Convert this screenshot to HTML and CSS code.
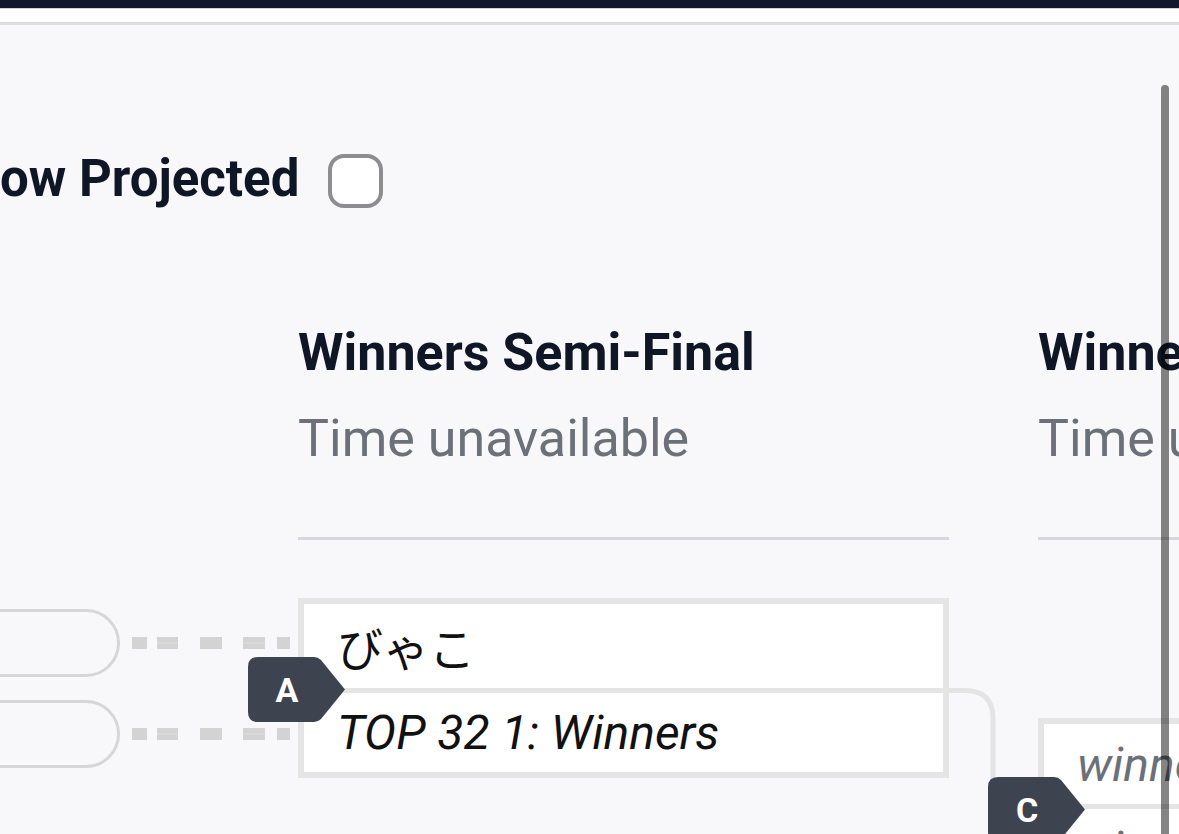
FILE: index.html
```html
<!DOCTYPE html>
<html lang="en">
<head>
<meta charset="utf-8">
<title>Bracket</title>
<link rel="stylesheet" href="styles.css">
</head>
<body>
<div class="topbar"></div>
<div class="subbar"></div>
<main class="content">
  <div class="projected">
    <span class="projected-label">Show Projected</span>
    <span class="checkbox"></span>
  </div>

  <div class="bracket">
    <div class="prev">
      <div class="slot">
        <div class="pill"></div>
        <svg class="dashes" width="178" height="14" viewBox="0 0 178 14">
          <g fill="#d3d3d3">
            <rect x="12" y="1" width="15" height="12"/><rect x="37" y="1" width="21" height="12"/><rect x="80" y="1" width="22" height="12"/><rect x="123" y="1" width="22" height="12"/><rect x="157" y="1" width="13" height="12"/>
          </g>
          <rect x="37" y="6.5" width="21" height="1" fill="#dedede"/><rect x="123" y="6.5" width="22" height="1" fill="#dedede"/>
        </svg>
      </div>
      <div class="slot">
        <div class="pill"></div>
        <svg class="dashes" width="178" height="14" viewBox="0 0 178 14">
          <g fill="#d3d3d3">
            <rect x="12" y="1" width="15" height="12"/><rect x="37" y="1" width="21" height="12"/><rect x="80" y="1" width="22" height="12"/><rect x="123" y="1" width="22" height="12"/><rect x="157" y="1" width="13" height="12"/>
          </g>
          <rect x="37" y="6.5" width="21" height="1" fill="#dedede"/><rect x="123" y="6.5" width="22" height="1" fill="#dedede"/>
        </svg>
      </div>
    </div>

    <section class="round">
      <header class="round-head">
        <h2 class="round-title">Winners Semi-Final</h2>
        <p class="round-time">Time unavailable</p>
      </header>
      <div class="match">
        <div class="entrant">びゃこ</div>
        <div class="entrant entrant-split"><em>TOP 32 1: Winners</em></div>
        <div class="badge"><svg class="badge-shape" width="97" height="65" viewBox="0 0 97 65"><path d="M10 0 H66 Q70 0 73 3 L97 32.5 L73 62 Q70 65 66 65 H10 Q0 65 0 55 V10 Q0 0 10 0 Z" fill="#3e4350"/></svg><span class="badge-letter">A</span></div>
        <svg class="link" width="60" height="160" viewBox="0 0 60 160"><path d="M0 2.5 H16 Q44 2.5 44 30.5 V160" fill="none" stroke="#e4e4e4" stroke-width="5"/></svg>
      </div>
    </section>

    <section class="round round-next">
      <header class="round-head">
        <h2 class="round-title">Winners Final</h2>
        <p class="round-time">Time unavailable</p>
      </header>
      <div class="match">
        <div class="entrant entrant-short placeholder"><em>winner of A</em></div>
        <div class="entrant entrant-split placeholder"><em>winner of B</em></div>
        <div class="badge"><svg class="badge-shape" width="97" height="65" viewBox="0 0 97 65"><path d="M10 0 H66 Q70 0 73 3 L97 32.5 L73 62 Q70 65 66 65 H10 Q0 65 0 55 V10 Q0 0 10 0 Z" fill="#3e4350"/></svg><span class="badge-letter">C</span></div>
      </div>
    </section>
  </div>

  <div class="scrollbar"></div>
</main>
</body>
</html>
```

FILE: styles.css
```css
html, body {
  margin: 0;
  padding: 0;
}

body {
  width: 1179px;
  height: 834px;
  overflow: hidden;
  background: #f8f8fa;
  font-family: Roboto, "Noto Sans CJK JP", sans-serif;
  color: #111827;
}

.topbar {
  height: 8px;
  background: #13162b;
}

.subbar {
  height: 13px;
  background: #ffffff;
  border-top: 1px solid #cfcfd5;
  border-bottom: 3px solid #dcdce2;
}

.content {
  position: relative;
  height: 809px;
  overflow: hidden;
  background: #f8f8fa;
}

.projected {
  display: flex;
  align-items: center;
  margin-top: 123px;
  margin-left: -60px;
  height: 62px;
}

.projected-label {
  font-size: 51px;
  line-height: 62px;
  font-weight: 700;
  color: #0f1626;
  white-space: nowrap;
}

.checkbox {
  box-sizing: border-box;
  width: 55px;
  height: 54px;
  margin-left: 29px;
  margin-top: 4px;
  border: 4px solid #8d8d8f;
  border-radius: 16px;
  background: #ffffff;
}

.bracket {
  display: flex;
  align-items: flex-start;
  margin-top: 112px;
  width: 2000px;
}

.prev {
  width: 298px;
  flex: none;
  padding-top: 287px;
  display: flex;
  flex-direction: column;
  gap: 23px;
}

.slot {
  display: flex;
  align-items: center;
  height: 68px;
}

.pill {
  box-sizing: border-box;
  flex: none;
  width: 320px;
  height: 68px;
  margin-left: -200px;
  border: 3px solid #d6d6d8;
  border-radius: 34px;
}

.dashes {
  flex: none;
  display: block;
}

.round {
  width: 651px;
  flex: none;
}

.round-next {
  margin-left: 89px;
}

.round-head {
  padding-bottom: 67px;
  border-bottom: 3px solid #d7d7dc;
}

.round-title {
  margin: 0;
  font-size: 52px;
  line-height: 62px;
  font-weight: 700;
  color: #0f1626;
  white-space: nowrap;
}

.round-time {
  margin: 24px 0 0;
  font-size: 52px;
  line-height: 62px;
  font-weight: 400;
  color: #6b7079;
  white-space: nowrap;
}

.match {
  position: relative;
  margin-top: 58px;
  border: 6px solid #e5e5e6;
  background: #ffffff;
}

.round-next .match {
  margin-top: 178px;
}

.entrant {
  box-sizing: border-box;
  height: 84px;
  padding-left: 33px;
  display: flex;
  align-items: center;
  font-size: 46px;
  color: #111111;
  white-space: nowrap;
}

.entrant-split {
  height: 84px;
  border-top: 5px solid #e5e5e6;
  font-size: 48px;
}

.entrant-short {
  height: 80px;
  font-size: 48px;
}

.entrant em {
  font-style: italic;
}

.placeholder {
  color: #6b7079;
}

.badge {
  position: absolute;
  left: -56px;
  top: 53px;
  width: 97px;
  height: 65px;
  z-index: 2;
}

.badge-shape {
  position: absolute;
  left: 0;
  top: 0;
  display: block;
}

.badge-letter {
  position: absolute;
  left: 0;
  top: 0;
  width: 78px;
  height: 65px;
  display: flex;
  align-items: center;
  justify-content: center;
  color: #ffffff;
  font-size: 34px;
  font-weight: 700;
}

.link {
  position: absolute;
  left: 100%;
  top: 84px;
  margin-left: 6px;
  display: block;
}

.scrollbar {
  position: absolute;
  top: 60px;
  right: 10px;
  bottom: 0;
  width: 8px;
  border-radius: 4px 4px 0 0;
  background: rgba(0, 0, 0, 0.48);
  z-index: 5;
}
```
